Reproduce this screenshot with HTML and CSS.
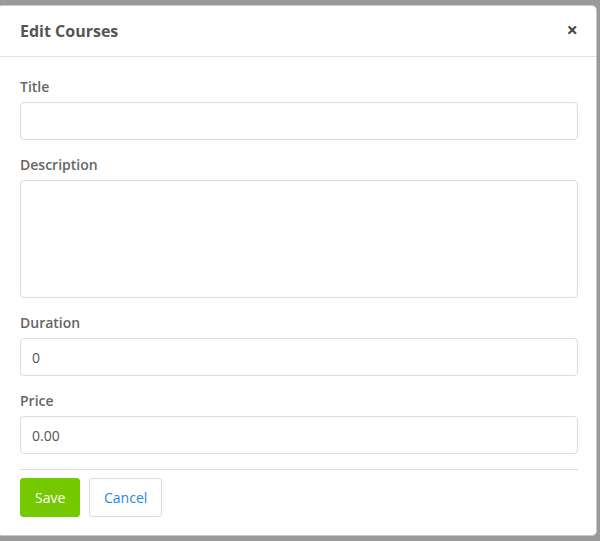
FILE: index.html
```html
<!DOCTYPE html>
<html>
<head>
<meta charset="utf-8">
<link rel="stylesheet" href="styles.css">
</head>
<body>
<div class="modal">
  <div class="modal-header">
    <h4 class="modal-title">Edit Courses</h4>
    <span class="close">&times;</span>
  </div>
  <div class="modal-body">
    <div class="form-group">
      <label class="label">Title</label>
      <input class="control" type="text" value="">
    </div>
    <div class="form-group">
      <label class="label">Description</label>
      <textarea class="control textarea"></textarea>
    </div>
    <div class="form-group">
      <label class="label">Duration</label>
      <input class="control" type="text" value="0">
    </div>
    <div class="form-group">
      <label class="label">Price</label>
      <input class="control" type="text" value="0.00">
    </div>
    <div class="actions">
      <button class="btn btn-save">Save</button>
      <button class="btn btn-cancel">Cancel</button>
    </div>
  </div>
</div>
</body>
</html>
```

FILE: styles.css
```css
html, body {
  margin: 0;
  padding: 0;
  background: #9a9a9a;
  font-family: "Open Sans", "Liberation Sans", sans-serif;
}
body {
  height: 541px;
  overflow: hidden;
}
.modal {
  margin: 5px 0 0 -3px;
  width: 600px;
  height: 531px;
  box-sizing: border-box;
  background: #fff;
  border: 1px solid #c8c8c8;
  border-radius: 5px;
}
.modal-header {
  display: flex;
  align-items: center;
  justify-content: space-between;
  height: 51px;
  box-sizing: border-box;
  padding: 0 18px 0 22px;
  border-bottom: 1px solid #e2e2e2;
}
.modal-title {
  margin: 0;
  font-size: 16px;
  font-weight: 700;
  color: #555;
}
.close {
  font-size: 20px;
  font-weight: 700;
  color: #4a4a4a;
  line-height: 1;
  margin-top: -2px;
}
.modal-body {
  padding: 20px 18px 0 22px;
}
.form-group {
  display: flex;
  flex-direction: column;
  margin-bottom: 15px;
}
.label {
  font-size: 14px;
  font-weight: 600;
  color: #666;
  line-height: 20px;
  margin-bottom: 5px;
}
.control {
  height: 38px;
  box-sizing: border-box;
  border: 1px solid #dcdcdc;
  border-radius: 4px;
  padding: 0 11px;
  font-family: "Open Sans", "Liberation Sans", sans-serif;
  font-size: 14px;
  color: #555;
  background: #fff;
  outline: none;
}
.textarea {
  height: 118px;
  resize: none;
}
.actions {
  display: flex;
  gap: 9px;
  border-top: 1px solid #dcdcdc;
  padding-top: 8px;
}
.btn {
  height: 39px;
  box-sizing: border-box;
  border-radius: 3px;
  font-family: "Open Sans", "Liberation Sans", sans-serif;
  font-size: 14px;
  padding: 0 14px;
}
.btn-save {
  background: #75c900;
  border: 1px solid #75c900;
  color: #fff;
  width: 60px;
}
.btn-cancel {
  background: #fff;
  border: 1px solid #dcdcdc;
  color: #1e88e5;
  width: 73px;
}
```
